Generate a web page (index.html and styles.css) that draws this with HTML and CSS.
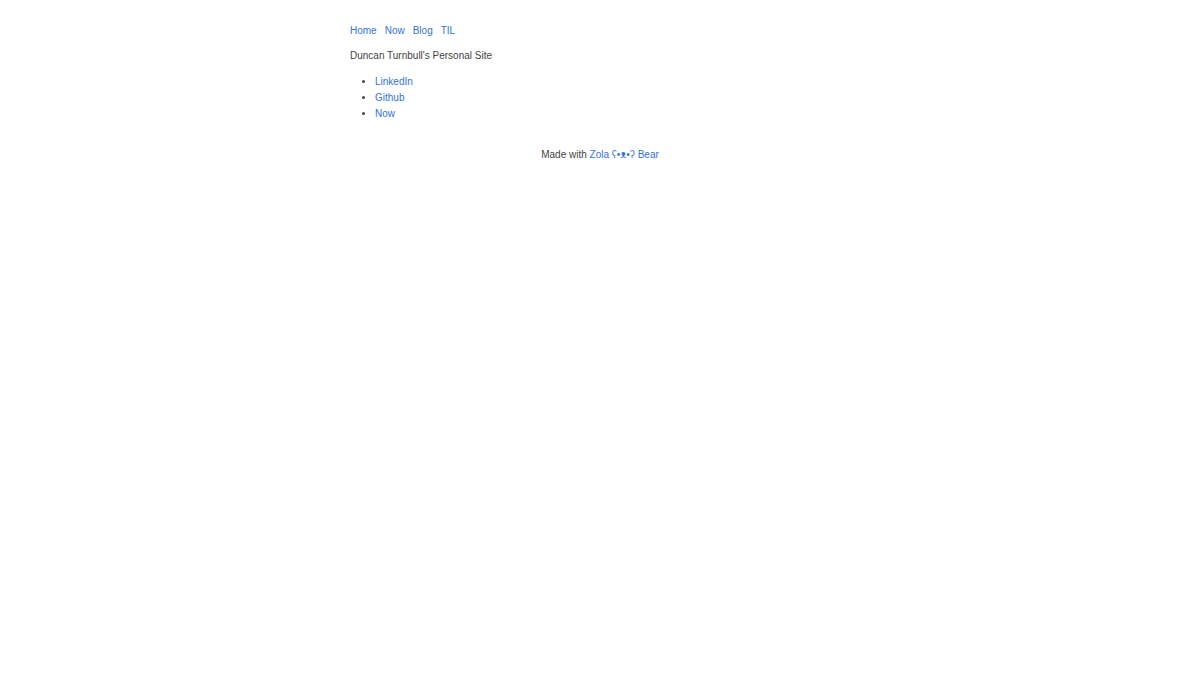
FILE: index.html
```html
<!DOCTYPE html>
<html lang="en">
<head>
<meta charset="utf-8">
<title>Duncan Turnbull</title>
<link rel="stylesheet" href="styles.css">
</head>
<body>
<div class="page">
  <header>
    <nav><a href="#">Home</a><a href="#">Now</a><a href="#">Blog</a><a href="#">TIL</a></nav>
  </header>
  <main>
    <p class="intro">Duncan Turnbull's Personal Site</p>
    <ul class="links">
      <li><a href="#">LinkedIn</a></li>
      <li><a href="#">Github</a></li>
      <li><a href="#">Now</a></li>
    </ul>
  </main>
  <footer>Made with <a href="#">Zola</a> <a href="#">ʕ•ᴥ•ʔ Bear</a></footer>
</div>
</body>
</html>
```

FILE: styles.css
```css
html, body {
  margin: 0;
  padding: 0;
  background: #fff;
}
body {
  font-family: "Liberation Sans", Arial, "DejaVu Sans", sans-serif;
  font-size: 10px;
  line-height: 16px;
  color: #444;
}
.page {
  width: 500px;
  margin: 0 auto;
  padding-top: 23px;
}
a {
  color: #3273dc;
  text-decoration: none;
}
nav a {
  margin-right: 8px;
}
.intro {
  margin: 9px 0 0;
}
.links {
  margin: 10px 0 0;
  padding-left: 25px;
}
footer {
  margin-top: 25px;
  text-align: center;
}
```
